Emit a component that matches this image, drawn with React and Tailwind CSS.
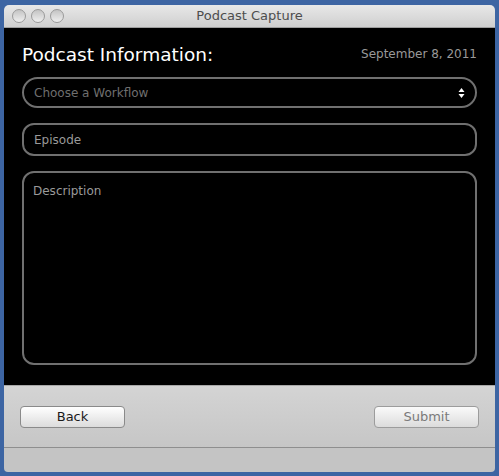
import React from 'react';

const TrafficLight = () => (
    <span className="w-[14px] h-[14px] rounded-full border border-[#9a9a9a] bg-gradient-to-b from-[#c4c4c4] to-[#efefef]" />
);

const App = () => {
    return (
        <div className="w-[499px] h-[476px] bg-[#3d65a3] pt-[5px] px-[4px] font-['DejaVu_Sans',sans-serif]">
            <div className="w-[491px] h-[467px] flex flex-col rounded-t-[5px] rounded-b-[4px] overflow-hidden">
                {/* title bar */}
                <div className="relative h-[23px] flex items-center bg-gradient-to-b from-[#e8e8e8] to-[#cfcfcf] border-b border-[#9e9e9e]">
                    <div className="flex gap-[5px] pl-[8px]">
                        <TrafficLight />
                        <TrafficLight />
                        <TrafficLight />
                    </div>
                    <div className="absolute inset-0 flex items-center justify-center text-[13px] text-[#4d4d4d]">
                        Podcast Capture
                    </div>
                </div>

                {/* form */}
                <div className="h-[357px] bg-black px-[18px] pt-[14px] flex flex-col">
                    <div className="flex items-start justify-between">
                        <h1 className="text-[18.5px] leading-[26px] text-white">Podcast Information:</h1>
                        <span className="text-[12px] leading-[26px] text-[#999999] -mt-[1px]">September 8, 2011</span>
                    </div>

                    <div className="mt-[9px] h-[31px] rounded-full border-2 border-[#707070] flex items-center justify-between pl-[10px] pr-[10px]">
                        <span className="text-[12px] text-[#6f6f6f]">Choose a Workflow</span>
                        <svg width="7" height="12" viewBox="0 0 7 12">
                            <path d="M3.5 1 L6.5 5 L0.5 5 Z" fill="#ffffff" />
                            <path d="M3.5 11 L6.5 7 L0.5 7 Z" fill="#ffffff" />
                        </svg>
                    </div>

                    <div className="mt-[15px] h-[33px] rounded-[12px] border-2 border-[#707070] flex items-center px-[10px]">
                        <span className="text-[12px] text-[#9a9a9a]">Episode</span>
                    </div>

                    <div className="mt-[15px] h-[194px] rounded-[12px] border-2 border-[#707070] px-[9px] pt-[5px]">
                        <span className="text-[12px] text-[#9a9a9a]">Description</span>
                    </div>
                </div>

                {/* bottom bar */}
                <div className="h-[62px] bg-gradient-to-b from-[#d4d4d4] to-[#c6c6c6] border-t border-[#a8a8a8] flex items-center justify-between px-[16px]">
                    <button className="w-[105px] h-[22px] rounded-[4px] border border-[#8a8a8a] bg-gradient-to-b from-[#ffffff] to-[#dcdcdc] text-[13px] text-[#1a1a1a]">
                        Back
                    </button>
                    <button className="w-[105px] h-[22px] rounded-[4px] border border-[#9c9c9c] bg-gradient-to-b from-[#fafafa] to-[#dcdcdc] text-[13px] text-[#7a7a7a]">
                        Submit
                    </button>
                </div>
                <div className="flex-1 bg-[#c4c4c4] border-t border-[#8e8e8e]" />
            </div>
        </div>
    );
};

export default App;
